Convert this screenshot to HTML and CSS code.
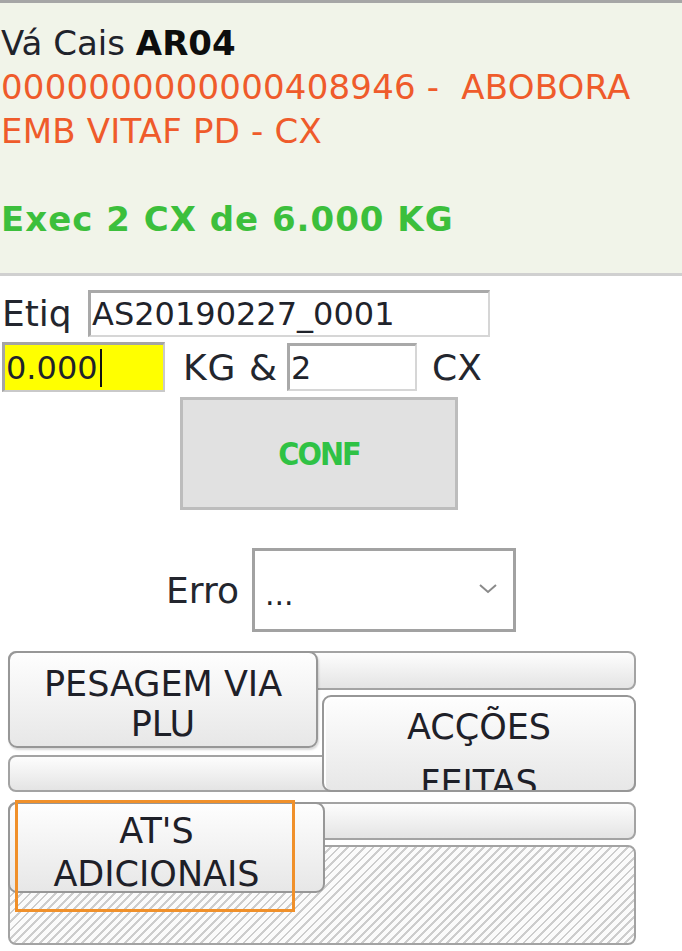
FILE: index.html
```html
<!DOCTYPE html>
<html lang="pt">

<head>
    <meta charset="UTF-8">
    <meta name="viewport" content="width=device-width, initial-scale=1.0">
    <title>Vá Cais</title>
    <link rel="stylesheet" href="styles.css">
</head>

<body>
    <!-- Task header -->
    <div class="header">
        <p>Vá Cais <b>AR04</b></p>
        <p class="item">0000000000000408946 -&nbsp; ABOBORA EMB VITAF PD - CX</p>
        <p class="exec">Exec 2 CX de 6.000 KG</p>
    </div>

    <!-- Input form -->
    <div class="form">
        <div class="row row-etiq">
            <span class="label label-etiq">Etiq</span>
            <div class="field field-etiq">AS20190227_0001</div>
        </div>
        <div class="row row-qty">
            <div class="field field-kg">0.000<span class="caret"></span></div>
            <span class="label unit-kg">KG &amp;</span>
            <div class="field field-cx">2</div>
            <span class="label unit-cx">CX</span>
        </div>
        <button class="btn-conf">CONF</button>
        <div class="row row-erro">
            <span class="label">Erro</span>
            <div class="select">
                <span>...</span>
                <svg class="chevron" width="18" height="10" viewBox="0 0 18 10">
                    <polyline points="1,1 9,8 17,1" fill="none" stroke="#8a8a8a" stroke-width="2" />
                </svg>
            </div>
        </div>
    </div>

    <!-- Tab rows -->
    <div class="tabs">
        <div class="tab-group group-1">
            <div class="strip strip-a"></div>
            <div class="strip strip-b"></div>
            <div class="tab tab-pesagem">PESAGEM VIA<br>PLU</div>
            <div class="tab tab-accoes">ACÇÕES<br>FEITAS</div>
        </div>
        <div class="tab-group group-2">
            <div class="strip strip-c"></div>
            <div class="hatch"></div>
            <div class="tab tab-ats">AT'S<br>ADICIONAIS</div>
            <div class="focus"></div>
        </div>
    </div>
</body>

</html>
```

FILE: styles.css
```css
/* Reset */
* {
    box-sizing: border-box;
}

body {
    margin: 0;
    background-color: #fff;
    font-family: "DejaVu Sans", Verdana, sans-serif;
    color: #1f232b;
}

/* Header panel */
.header {
    background-color: #f1f4e9;
    border-top: 3px solid #a6a6a6;
    border-bottom: 3px solid #d0d0d0;
    padding: 18px 0 32px 1px;
    font-size: 34px;
    line-height: 44px;
}

.header p {
    margin: 0;
}

.header b {
    color: #0d0d0d;
}

.item {
    color: #ef5b2b;
    letter-spacing: 0.2px;
}

.exec {
    margin-top: 44px !important;
    color: #3cbf3c;
    font-weight: bold;
    letter-spacing: 1px;
}

/* Form */
.form {
    padding-top: 14px;
}

.row {
    display: flex;
    align-items: center;
}

.label {
    font-size: 36px;
    color: #23262e;
}

.row-etiq {
    padding-left: 2px;
    height: 47px;
}

.label-etiq {
    width: 86px;
}

.field {
    display: flex;
    align-items: center;
    padding-left: 1px;
    font-size: 32px;
    background-color: #fff;
    border-style: solid;
    border-width: 3px 2px 2px 3px;
    border-color: #a9a9a9 #d6d6d6 #d6d6d6 #a9a9a9;
}

.field-etiq {
    width: 402px;
    height: 47px;
}

.row-qty {
    margin-top: 5px;
    padding-left: 2px;
}

.field-kg {
    width: 163px;
    height: 50px;
    background-color: #ffff00;
    border-color: #a5a5a5 #c9c9c9 #c9c9c9 #a5a5a5;
}

.caret {
    width: 2px;
    height: 38px;
    margin-left: 2px;
    background-color: #111;
}

.unit-kg {
    margin-left: 18px;
    letter-spacing: 1px;
}

.field-cx {
    width: 130px;
    height: 48px;
    margin-left: 9px;
}

.unit-cx {
    margin-left: 15px;
}

.btn-conf {
    display: block;
    margin: 5px 0 0 180px;
    width: 278px;
    height: 113px;
    background-color: #e1e1e1;
    border: 3px solid #bdbdbd;
    font-family: "DejaVu Sans Condensed", "DejaVu Sans", sans-serif;
    font-stretch: condensed;
    font-size: 32px;
    font-weight: bold;
    letter-spacing: -2px;
    color: #2fc245;
}

.row-erro {
    justify-content: center;
    gap: 13px;
    margin-top: 38px;
}

.select {
    display: flex;
    align-items: center;
    justify-content: space-between;
    width: 264px;
    height: 84px;
    padding: 8px 16px 0 10px;
    border: 3px solid #a2a2a2;
    font-size: 30px;
}

.chevron {
    margin-top: -10px;
}

/* Tab control */
.tabs {
    padding: 19px 0 0 8px;
}

.tab-group {
    display: grid;
    width: 628px;
}

.group-1 {
    grid-template-columns: 314px 314px;
    grid-template-rows: 44px 60px 37px;
}

.group-2 {
    margin-top: 10px;
    grid-template-columns: 317px 311px;
    grid-template-rows: 43px 48px 52px;
}

.strip {
    border: 2px solid #a3a3a3;
    border-radius: 8px;
    background: linear-gradient(#fdfdfd, #e4e4e4);
}

.strip-a {
    grid-area: 1 / 1 / 2 / 3;
    height: 39px;
}

.strip-b {
    grid-area: 3 / 1 / 4 / 3;
}

.strip-c {
    grid-area: 1 / 1 / 2 / 3;
    height: 38px;
}

.tab {
    overflow: hidden;
    border: 2px solid #979797;
    border-radius: 9px;
    background: linear-gradient(#fefefe, #e7e7e7);
    font-size: 35px;
    text-align: center;
    color: #1e2028;
}

.tab-pesagem {
    grid-area: 1 / 1 / 3 / 2;
    width: 310px;
    height: 97px;
    padding: 11px 0 0;
    line-height: 40px;
    box-shadow: 1px 2px 2px rgba(0, 0, 0, 0.15);
}

.tab-accoes {
    grid-area: 2 / 2 / 4 / 3;
    padding-top: 2px;
    line-height: 56px;
    box-shadow: inset 2px 2px 0 #fff;
}

.tab-ats {
    grid-area: 1 / 1 / 3 / 2;
    padding: 6px 20px 0 0;
    line-height: 43px;
}

.hatch {
    grid-area: 2 / 1 / 4 / 3;
    border: 2px solid #a3a3a3;
    border-radius: 8px;
    background: repeating-linear-gradient(135deg, #fbfbfb 0 4px, #cdcdcd 4px 6px);
}

.focus {
    grid-area: 1 / 1 / 4 / 2;
    align-self: start;
    width: 280px;
    height: 112px;
    margin: -2px 0 0 7px;
    border: 3px solid #f0902a;
}
```
